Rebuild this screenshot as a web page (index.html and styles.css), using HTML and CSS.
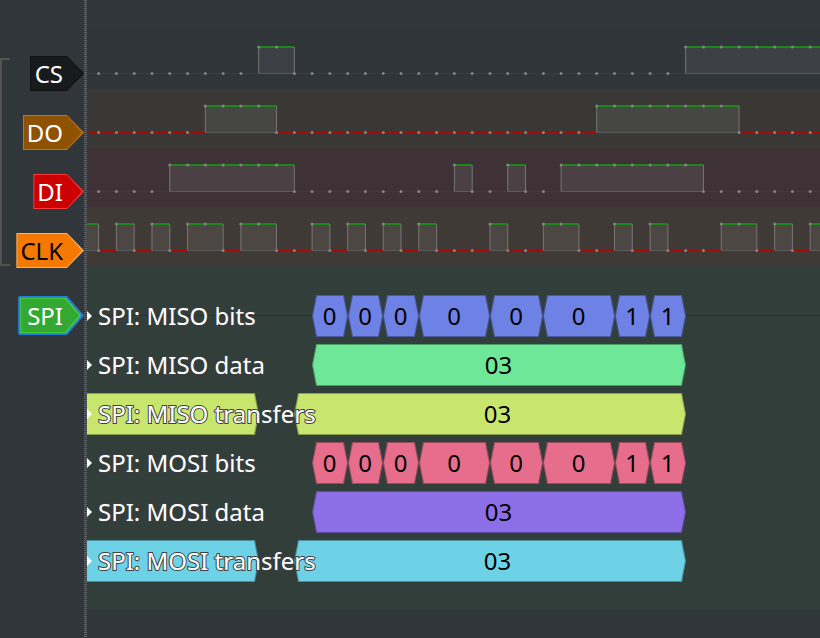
FILE: index.html
```html
<!DOCTYPE html>
<html lang="en">
<head>
<meta charset="utf-8">
<meta name="viewport" content="width=device-width, initial-scale=1">
<title>SPI trace</title>
<link rel="stylesheet" href="styles.css">
</head>
<body>
<main class="view">
  <div class="headers">
    <div class="group">
      <button class="tag tag-cs" type="button">CS</button>
      <button class="tag tag-do" type="button">DO</button>
      <button class="tag tag-di" type="button">DI</button>
      <button class="tag tag-clk" type="button">CLK</button>
    </div>
    <button class="tag tag-spi" type="button">SPI</button>
  </div>
  <div class="traces">
    <svg class="wave wave-cs" data-high="9-11 33-60"></svg>
    <svg class="wave wave-do" data-high="6-10 28-36"></svg>
    <svg class="wave wave-di" data-high="4-11 20-21 23-24 26-34"></svg>
    <svg class="wave wave-clk" data-high="-2-0 1-2 3-4 5-7 8-10 12-13 14-15 16-17 18-19 22-23 25-27 29-30 31-32 35-37 38-39 40-42"></svg>
    <section class="decoder">
      <div class="row bits miso-bits" data-start="12" data-items="2:0 2:0 2:0 4:0 3:0 4:0 2:1 2:1"><span class="name">SPI: MISO bits</span></div>
      <div class="row miso-data" data-start="12" data-items="21:03"><span class="name">SPI: MISO data</span></div>
      <div class="row transfers miso-transfers" data-start="11" data-items="22:03"><span class="name">SPI: MISO transfers</span></div>
      <div class="row bits mosi-bits" data-start="12" data-items="2:0 2:0 2:0 4:0 3:0 4:0 2:1 2:1"><span class="name">SPI: MOSI bits</span></div>
      <div class="row mosi-data" data-start="12" data-items="21:03"><span class="name">SPI: MOSI data</span></div>
      <div class="row transfers mosi-transfers" data-start="11" data-items="22:03"><span class="name">SPI: MOSI transfers</span></div>
    </section>
  </div>
</main>
<script src="trace.js"></script>
</body>
</html>
```
FILE: styles.css
```css
* { box-sizing: border-box; }

body {
  margin: 0;
  background: #31363b;
  font-family: "Noto Sans", sans-serif;
  font-size: 24px;
  line-height: 32px;
}

.view {
  display: flex;
  min-height: 100vh;
}

/* Signal headers */
.headers {
  flex: none;
  width: 87px;
  padding: 56px 3px 0 0;
  display: flex;
  flex-direction: column;
  align-items: flex-end;
  gap: 28px;
  background: repeating-linear-gradient(#61666a 0 1px, #353a3f 1px 2px) right 0 top 0 / 3px 100% no-repeat;
}

.group {
  position: relative;
  width: 100%;
  display: flex;
  flex-direction: column;
  align-items: flex-end;
  gap: 24px;
}

.group::before {
  content: "";
  position: absolute;
  inset: 2px auto 2px 0;
  width: 8px;
  border: solid #53544e;
  border-width: 2px 0 2px 2px;
}

.tag {
  position: relative;
  isolation: isolate;
  height: 35px;
  margin: 0;
  padding: 1px 21px 0 4px;
  border: 0;
  background: var(--edge);
  color: #fff;
  font: inherit;
  clip-path: polygon(0 0, calc(100% - 17px) 0, 100% 50%, calc(100% - 17px) 100%, 0 100%);
}

.tag::before {
  content: "";
  position: absolute;
  z-index: -1;
  inset: 1px 2px 1px 1px;
  background: var(--fill);
  clip-path: polygon(0 0, calc(100% - 15px) 0, 100% 50%, calc(100% - 15px) 100%, 0 100%);
}

.tag-cs { --edge: #101313; --fill: #171b1c; padding-left: 5px; }
.tag-do { --edge: #c97600; --fill: #8f5202; }
.tag-di { --edge: #f53b3b; --fill: #cc0000; }
.tag-clk { --edge: #ffb45e; --fill: #f57900; color: #000; }
.tag-spi {
  --edge: #2980d8;
  height: 39px;
  padding-left: 9px;
  border-radius: 2px;
}
.tag-spi::before {
  inset: 2px 3px 2px 2px;
  background: #43d039;
}
.tag-spi::after {
  content: "";
  position: absolute;
  z-index: -1;
  inset: 3px 5px 3px 3px;
  background: #33a833;
  clip-path: polygon(0 0, calc(100% - 14px) 0, 100% 50%, calc(100% - 14px) 100%, 0 100%);
}

/* Logic traces */
.traces {
  flex: 1;
  min-width: 0;
  padding-top: 30px;
  overflow: hidden;
}

.wave {
  display: block;
  width: 100%;
  height: 59px;
}
.wave-cs { background: #2f3539; }
.wave-do { background: #393835; }
.wave-di { background: #3e3236; }
.wave-clk { background: #403a36; }

.low { stroke: #b30b0b; stroke-width: 1; }
.wave-do .low, .wave-clk .low { stroke-width: 2; stroke: #a80a0a; }
.base { stroke: #5b5a5a; stroke-width: 1; }
.pulse { fill: #fff; fill-opacity: .07; }
.wave-cs .pulse { fill: #f0d8f0; }
.edge { stroke: #777675; stroke-width: 1; }
.high { stroke: #1c861c; stroke-width: 2; }
.dot { fill: #858483; }

/* Decoder rows */
.decoder {
  min-height: 344px;
  padding: 29px 0 28px;
  display: flex;
  flex-direction: column;
  justify-content: space-between;
  background: #313e3a;
}

.row {
  position: relative;
  display: flex;
  height: 42px;
  line-height: 42px;
}

.row:first-child::before {
  content: "";
  position: absolute;
  inset: 20px 0 auto;
  height: 1px;
  background: #27312e;
}

.row::after {
  content: "";
  position: absolute;
  left: 0;
  top: 16px;
  border: solid transparent;
  border-width: 5px 0 5px 5px;
  border-left-color: #fff;
}

.name {
  position: absolute;
  z-index: 1;
  left: 11px;
  color: #fff;
  white-space: nowrap;
  -webkit-text-stroke: 2px #3c4042;
  paint-order: stroke fill;
}

.item {
  position: relative;
  isolation: isolate;
  flex: none;
  background: var(--edge);
  color: #000;
  text-align: center;
  padding-right: 1px;
  clip-path: polygon(4px 0, calc(100% - 4px) 0, 100% 50%, calc(100% - 4px) 100%, 4px 100%, 0 50%);
}

.item::before {
  content: "";
  position: absolute;
  z-index: -1;
  inset: 1px;
  background: var(--fill);
  clip-path: polygon(4px 0, calc(100% - 4px) 0, 100% 50%, calc(100% - 4px) 100%, 4px 100%, 0 50%);
}

.transfers .item { padding: 0 0 0 15px; }
.transfers .previous { clip-path: polygon(0 0, calc(100% - 4px) 0, 100% 50%, calc(100% - 4px) 100%, 0 100%); }
.transfers .previous::before {
  left: 0;
  clip-path: polygon(0 0, calc(100% - 4px) 0, 100% 50%, calc(100% - 4px) 100%, 0 100%);
}

.miso-bits { --fill: #6e82e6; --edge: #4b599c; }
.miso-data { --fill: #6ee898; --edge: #4b9e68; }
.miso-transfers { --fill: #c8e66e; --edge: #889d4b; }
.mosi-bits { --fill: #e66e8c; --edge: #9c4b5f; }
.mosi-data { --fill: #8c6ee6; --edge: #5f4b9c; }
.mosi-transfers { --fill: #6ed2e6; --edge: #4b8f9c; }
```
FILE: trace.js
```js
// Pixels per sample, and the position of the first visible sample.
const STEP = 17.79;
const ORIGIN = 11.6;
const HIGH = 17;
const LOW = 43.5;
const x = (sample) => ORIGIN + sample * STEP;

function shape(svg, tag, cls, attrs) {
  const el = document.createElementNS("http://www.w3.org/2000/svg", tag);
  el.setAttribute("class", cls);
  for (const key in attrs) el.setAttribute(key, attrs[key]);
  svg.append(el);
}

function line(svg, cls, x1, y1, x2, y2) {
  shape(svg, "line", cls, { x1, y1, x2, y2 });
}

for (const svg of document.querySelectorAll(".wave")) {
  const pulses = svg.dataset.high.split(" ").map((text) => {
    const [, from, to] = text.match(/^(-?\d+)-(\d+)$/);
    return [Number(from), Number(to)];
  });
  let last = -2;
  for (const [from, to] of pulses) {
    line(svg, "low", x(last), LOW, x(from), LOW);
    shape(svg, "rect", "pulse", { x: x(from), y: HIGH, width: x(to) - x(from), height: LOW - HIGH });
    line(svg, "base", x(from), LOW, x(to), LOW);
    line(svg, "high", x(from), HIGH, x(to), HIGH);
    line(svg, "edge", x(from), HIGH, x(from), LOW);
    line(svg, "edge", x(to), HIGH, x(to), LOW);
    last = to;
  }
  line(svg, "low", x(last), LOW, x(last + 60), LOW);
  for (let s = 0; s < 60; s++) {
    const up = pulses.some(([from, to]) => s >= from && s < to);
    shape(svg, "circle", "dot", { cx: x(s), cy: up ? HIGH : LOW, r: 1.5 });
  }
}

function addItem(row, cls, width, text) {
  const item = document.createElement("span");
  item.className = cls;
  item.style.width = width + "px";
  item.textContent = text;
  row.append(item);
  return item;
}

for (const row of document.querySelectorAll(".row")) {
  let sample = Number(row.dataset.start);
  let left = Math.round(x(sample));
  if (row.classList.contains("transfers")) {
    // The previous transfer ends two samples before this one starts.
    const previous = Math.round(x(sample - 2));
    const item = addItem(row, "item previous", previous, "");
    item.style.marginRight = left - previous + "px";
  } else {
    row.style.paddingLeft = left + "px";
  }
  for (const part of row.dataset.items.split(" ")) {
    const [length, text] = part.split(":");
    sample += Number(length);
    const right = Math.round(x(sample));
    addItem(row, "item", right - left, text);
    left = right;
  }
}
```
